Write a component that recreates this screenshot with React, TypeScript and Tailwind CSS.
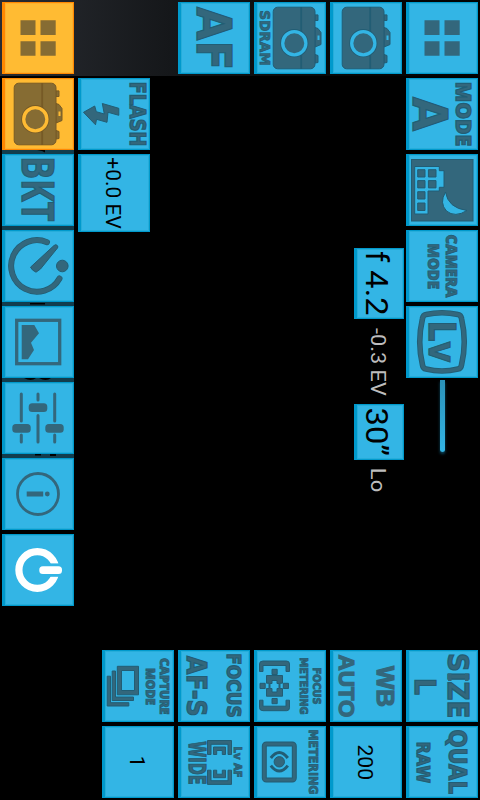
import React from "react";

type Tone = "blue" | "orange";

function Tile({ tone = "blue", className = "h-[72px] w-[72px]", children }: { tone?: Tone; className?: string; children?: React.ReactNode }) {
  const colors =
    tone === "orange"
      ? "border-[#ff8800] bg-[#ffbb33] shadow-[inset_0_0_0_1px_#fcb02f] fill-[#866c33] stroke-[#765a26]"
      : "border-[#0099cc] bg-[#33b5e5] shadow-[inset_0_0_0_1px_#26add9] fill-[#33677c] stroke-[#225d74]";
  return (
    <div className={`shrink-0 border border-l-[3px] ${colors} ${className}`}>
      <svg className="-mt-px -ml-[3px] block h-[72px] w-[72px] overflow-visible" viewBox="0 0 72 72">
        {children}
      </svg>
    </div>
  );
}

/* A label that reads downwards: x is its baseline, y its start, cap the height of its capitals. */
function Label({ x, y, cap, len, children, className = "font-['DejaVu_Sans',sans-serif] font-bold" }: { x: number; y: number; cap: number; len: number; children: string; className?: string }) {
  return (
    <text transform={`translate(${x} ${y}) rotate(90)`} fontSize={cap / 0.725} strokeWidth={cap > 12 ? 1.2 : 0.8} textLength={len} lengthAdjust="spacingAndGlyphs" className={className}>
      {children}
    </text>
  );
}

const heavy = "font-['Open_Sans',sans-serif] font-extrabold";
const readout = "font-['Roboto',sans-serif] font-normal fill-black stroke-none";
const dimReadout = "font-['Roboto',sans-serif] font-normal fill-[#bdbdbd] stroke-none";

function GridIcon() {
  return <path className="stroke-none" d="M18.500 18.300h15v14.700h-15zM38.500 18.300h15.200v14.700h-15.200zM18.500 39.200h15v14.500h-15zM38.500 39.200h15.200v14.500h-15.200z" />;
}

function Camera({ shift = 0, tone = "blue" }: { shift?: number; tone?: Tone }) {
  const light = tone === "orange" ? "stroke-[#ffbb33]" : "stroke-[#33b5e5]";
  const hole = tone === "orange" ? "fill-[#ffbb33]" : "fill-[#33b5e5]";
  return (
    <g transform={`translate(${shift} 0)`}>
      <path d="M54 12.900h3v5.600h-3zM54 25.500l3 1 3 4v12l-6 2.500zM54 52.500l3 1v7l-3 .5z" />
      <rect className={`${hole} stroke-none`} x="56.500" y="33.500" width="2" height="4.500" />
      <rect x="12.200" y="5.200" width="41.800" height="61.600" rx="4.500" />
      <path d="M40.200 5v62" strokeWidth="1.800" />
      <circle cx="33.300" cy="41.200" r="11.600" strokeWidth="5" />
      <circle className={light} cx="33.300" cy="41.200" r="11.600" strokeWidth="3.300" />
    </g>
  );
}

/* Sliver of the menu that shows between two buttons of the left column. */
function Seam({ d }: { d?: string }) {
  return (
    <svg className="block h-1 w-[72px] shrink-0 bg-[#123d4d]" viewBox="0 0 72 4">
      {d && <path d={d} />}
    </svg>
  );
}

export default function App() {
  return (
    <main className="flex h-[800px] w-[480px] flex-col overflow-hidden bg-black">
      <header className="flex h-[76px] justify-between bg-linear-to-r from-[#292c32] via-[#101214] via-45% to-[#020202] px-0.5 pt-0.5">
        <Tile tone="orange"><GridIcon /></Tile>
        <div className="flex gap-1">
          <Tile><Label x={18.500} y={4.700} cap={34.800} len={63.500}>AF</Label></Tile>
          <Tile>
            <Camera shift={7} />
            <Label x={5.500} y={8.300} cap={10.800} len={55.500}>SDRAM</Label>
          </Tile>
          <Tile><Camera /></Tile>
          <Tile><GridIcon /></Tile>
        </div>
      </header>

      <section className="flex h-[574px] px-0.5 pt-0.5">
        <nav className="flex w-[72px] flex-col">
          <Tile tone="orange"><Camera tone="orange" /></Tile>
          <Seam d="M35 0h8v2.500l-3-1.500z" />
          <Tile><Label x={19.500} y={2} cap={33} len={65.500} className="font-['Open_Sans',sans-serif] font-bold">BKT</Label></Tile>
          <Seam />
          <Tile>
            <path className="fill-none" strokeWidth="6" strokeLinecap="round" d="M45 12.200A25.800 25.800 0 1 0 57.500 48.500" />
            <path className="fill-none stroke-[#33677c]" strokeWidth="4.600" strokeLinecap="round" d="M45 12.200A25.800 25.800 0 1 0 57.500 48.500" />
            <circle cx="60.300" cy="36" r="5.800" />
            <path strokeLinejoin="round" d="M52 15.500q2-1.800 3.500.2.700 1.200 0 2.300L38.500 39l-4.500 3.200q-4-1.700-5.500-5z" />
          </Tile>
          <Seam d="M28 1h15v1.500h-15z" />
          <Tile>
            <rect className="fill-none stroke-[#33677c]" x="14.700" y="14.300" width="43" height="43.400" strokeWidth="3.300" />
            <path className="stroke-none" d="M19.700 19h12.600l4.700 8.300-8 9.400 3 7.300-6 9.300h-6.300z" />
          </Tile>
          <Seam d="M22 0h12q-5 4-12 0zM37 0h12q-5 4-12 0z" />
          <Tile>
            <path className="stroke-[#33677c]" strokeWidth="3" strokeLinecap="round" d="M19.300 12v27M19.300 53v7M36 12v6M36 33.500v26.500M52.700 12v27M52.700 53v7" />
            <g className="stroke-none">
              <rect x="10.300" y="42" width="18.400" height="8.700" rx="3.500" />
              <rect x="26.700" y="21.200" width="18.600" height="8.700" rx="3.500" />
              <rect x="43.300" y="42" width="18.400" height="8.700" rx="3.500" />
            </g>
          </Tile>
          <Seam d="M33 0h6v1.500h-6zM48 0h6v2h-6z" />
          <Tile>
            <circle className="fill-none stroke-[#33677c]" cx="36" cy="36" r="20.500" strokeWidth="2.800" />
            <g className="stroke-none">
              <rect x="24.700" y="33.500" width="16.500" height="5" />
              <circle cx="45.300" cy="36" r="2.400" />
            </g>
          </Tile>
          <div className="h-1 shrink-0" />
          <Tile>
            <circle className="fill-none stroke-white" cx="35.300" cy="36" r="18.400" strokeWidth="7.200" />
            <rect className="fill-[#33b5e5] stroke-none" x="42" y="29.400" width="20" height="13.400" />
            <rect className="fill-white stroke-none" x="37.300" y="32.300" width="22.700" height="7.600" rx="3.500" />
          </Tile>
        </nav>

        <div className="ml-1 flex flex-col gap-1">
          <Tile>
            <Label x={51.500} y={3.700} cap={15} len={64.500}>FLASH</Label>
            <path d="M5.500 34.300L16.700 28l1.600 5.700 8 2.300-2-10.500L40.800 30.300v7L30 34.300l-1 10-10.500-3-1 5.500z" />
          </Tile>
          <Tile className="h-[78px] w-[72px]">
            <Label x={28} y={3.300} cap={14.700} len={71.500} className={readout}>+0.0 EV</Label>
          </Tile>
        </div>

        <div className="ml-auto flex w-[50px] flex-col pt-[170px]">
          <Tile className="h-[71px] w-[50px]">
            <Label x={12} y={3} cap={23.200} len={64.500} className={readout}>f 4.2</Label>
          </Tile>
          <svg className="block h-[85px] w-[50px] shrink-0" viewBox="0 0 50 85">
            <Label x={17} y={9} cap={14.700} len={67.800} className={dimReadout}>-0.3 EV</Label>
          </svg>
          <Tile className="h-[56px] w-[50px]">
            <Label x={12} y={3.500} cap={23.200} len={48.500} className={readout}>30”</Label>
          </Tile>
          <svg className="block h-10 w-[50px] shrink-0" viewBox="0 0 50 40">
            <Label x={17} y={7.800} cap={14.700} len={24.500} className={dimReadout}>Lo</Label>
          </svg>
        </div>

        <nav className="ml-0.5 flex w-[72px] flex-col gap-1">
          <Tile>
            <Label x={49.500} y={3.700} cap={15} len={64.500} className={heavy}>MODE</Label>
            <Label x={6.500} y={18.800} cap={35} len={34.500}>A</Label>
          </Tile>
          <Tile>
            <rect x="5.500" y="5.500" width="61.500" height="61.500" />
            <path className="fill-[#33b5e5]" d="M8.700 12.500h24.600v4.200h4.700v16.600h-4.700v3.700h-11.300v23h-13.300zM39.500 38Q42 54 61 56.500 49 64 40.500 57 33 49 39.500 38z" />
            <path d="M11.700 15.700h7.300v7.300h-7.300zM22.400 15.700h7.600v7.300h-7.600zM11.700 26.600h7.300v7.300h-7.300zM22.400 26.600h7.600v7.300h-7.600zM11.700 37.700h7.300v7.300h-7.300zM11.700 49h7.300v7.500h-7.300z" />
          </Tile>
          <Tile>
            <Label x={39.500} y={4.500} cap={11} len={63} className={heavy}>CAMERA</Label>
            <Label x={21.500} y={13.500} cap={11} len={45.500} className={heavy}>MODE</Label>
          </Tile>
          <Tile>
            <path className="fill-none" strokeWidth="5.600" d="M20 8.500Q36 5 52 8.500q3 .5 3.500 4Q61 36 55.500 59q-.5 3.500-3.500 4Q36 67 20 63q-3-.5-3.500-4Q11 36 16.500 12.500q.5-3.500 3.500-4z" />
            <path className="fill-none stroke-[#33677c]" strokeWidth="3.800" d="M20 8.500Q36 5 52 8.500q3 .5 3.500 4Q61 36 55.500 59q-.5 3.500-3.500 4Q36 67 20 63q-3-.5-3.500-4Q11 36 16.500 12.500q.5-3.500 3.500-4z" />
            <Label x={22.500} y={14.500} cap={27.500} len={42}>Lv</Label>
          </Tile>
          <div className="-mt-0.5 ml-[34px] h-[72px] w-[5px] rounded-b-sm bg-linear-to-b from-[#2b91b8] to-[#33b5e5] shadow-[0_2px_3px_#0b4a63]" />
        </nav>
      </section>

      <footer className="grid grid-cols-[repeat(5,72px)] justify-end gap-1 pr-0.5">
        <Tile>
          <Label x={57.500} y={8} cap={9} len={56.500} className={heavy}>CAPTURE</Label>
          <Label x={43.500} y={18} cap={9} len={37} className={heavy}>MODE</Label>
          <path fillRule="evenodd" d="M15.300 16.300h21.200v28.500h-21.200zM19.500 20.500h13v20h-13z" />
          <path d="M10.200 21h3.300v26h18v3.500h-21.300zM5.200 26.200h3.300v26.500h18.300v3.300h-21.600z" />
        </Tile>
        <Tile>
          <Label x={48.500} y={3.200} cap={14} len={64.500}>FOCUS</Label>
          <Label x={9} y={6} cap={19} len={60.500}>AF-S</Label>
        </Tile>
        <Tile>
          <Label x={59} y={17.500} cap={7.600} len={37}>FOCUS</Label>
          <Label x={45.700} y={7.500} cap={7.600} len={57}>METERING</Label>
          <path d="M9 11h23.500q3 0 3 3v7.500h-3.500v-6h-23v6h-3.500v-7.500q0-3 3.500-3zM5.500 50.200h3.500v6h23v-6h3.500v7.500q0 3-3 3h-23.500q-3.500 0-3.500-3z" />
          <path d="M18 19.300h5.200v5.200h-5.200zM18 48.500h5.200v5.200h-5.200zM6 33.300h5.200v5.200h-5.200zM29.300 33.300h5.200v5.200h-5.200z" />
          <path fillRule="evenodd" d="M12.500 25.500h16v7.700h-2.500v5.300h2.500v7.700h-16v-7.700h2.500v-5.300h-2.500zM18 30.500h5v3h2v5h-2v3.500h-5v-3.500h-2v-5h2z" />
        </Tile>
        <Tile>
          <g className="stroke-[#33677c]">
            <Label x={46.500} y={16} cap={17} len={41} className="font-['Liberation_Sans',sans-serif] font-bold">WB</Label>
            <Label x={9} y={4.500} cap={16} len={63} className="font-['Liberation_Sans',sans-serif] font-bold">AUTO</Label>
          </g>
        </Tile>
        <Tile>
          <Label x={42} y={3} cap={20.500} len={65.500}>SIZE</Label>
          <path className="stroke-none" d="M42 23.500h3.500v7.500h-3.500zM59 23.500h3.500v7.500h-3.500z" />
          <Label x={8.700} y={28} cap={20} len={17}>L</Label>
        </Tile>
        <Tile><Label x={28} y={29.800} cap={14.700} len={11.300} className={readout}>1</Label></Tile>
        <Tile>
          <Label x={56.300} y={20.500} cap={8} len={31}>Lv AF</Label>
          <Label x={10.500} y={15.200} cap={17} len={43.500}>WIDE</Label>
          <path d="M29.500 28.500v-14h24v14h-3.500v-10.200h-17v10.200zM35.500 28.500v-7.500h12v7.500h-3.200v-4h-5.600v4zM29.500 44.200v14.200h24v-14.200h-3.500v10.500h-17v-10.500zM35.500 44.200v7.500h12v-7.500h-3.200v4h-5.600v-4z" />
        </Tile>
        <Tile>
          <Label x={54.500} y={3.500} cap={8.500} len={65}>METERING</Label>
          <rect className="fill-none" x="10.300" y="18" width="30" height="36" rx="2" strokeWidth="5" />
          <rect className="fill-none stroke-[#33677c]" x="10.300" y="18" width="30" height="36" rx="2" strokeWidth="3" />
          <circle cx="25.300" cy="35.800" r="5.200" />
          <path className="fill-none" strokeWidth="3" d="M16.800 32Q25.300 21 33.800 32M16.800 39.600Q25.300 50.600 33.800 39.600" />
        </Tile>
        <Tile><Label x={28.300} y={18.500} cap={14.700} len={35.500} className={readout}>200</Label></Tile>
        <Tile>
          <Label x={42.700} y={3.500} cap={18} len={64.500}>QUAL</Label>
          <Label x={11.300} y={15.500} cap={12.500} len={41.500}>RAW</Label>
        </Tile>
      </footer>
    </main>
  );
}
